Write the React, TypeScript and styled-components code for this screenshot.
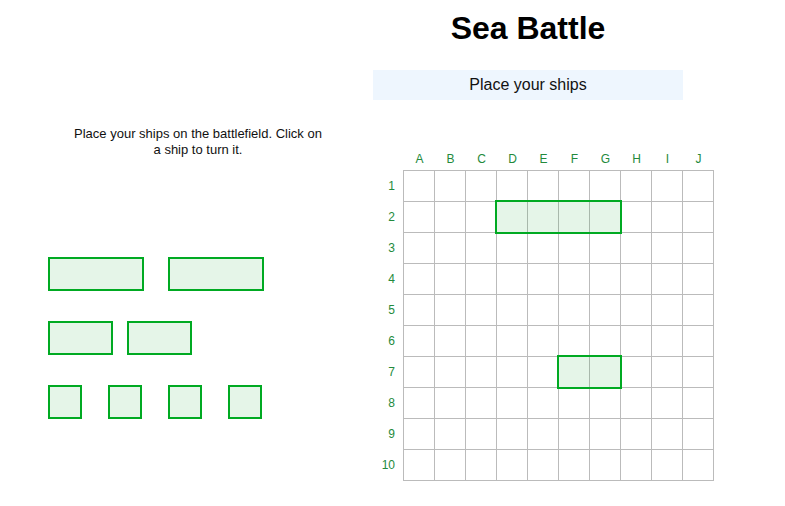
import React from 'react';
import styled, { createGlobalStyle } from 'styled-components';

const GlobalStyle = createGlobalStyle`
  body {
    margin: 0;
    background: #ffffff;
    font-family: Arial, "Liberation Sans", sans-serif;
    color: #000;
  }
`;

const CELL = 31;
const COLS = ['A', 'B', 'C', 'D', 'E', 'F', 'G', 'H', 'I', 'J'];
const ROWS = Array.from({ length: 10 }, (_, i) => i + 1);

type Placed = { col: number; row: number; size: number };

// ships already on the field
const placed: Placed[] = [
  { col: 3, row: 1, size: 4 },
  { col: 5, row: 6, size: 2 },
];

// ships still waiting in the dock, per row with its spacing
const dock = [
  { gap: 24, sizes: [3, 3] },
  { gap: 14, sizes: [2, 2] },
  { gap: 26, sizes: [1, 1, 1, 1] },
];

const Page = styled.div`
  display: flex;
  gap: 25px;
  padding-left: 48px;
  width: 785px;
  height: 506px;
  box-sizing: border-box;
`;

const LeftColumn = styled.div`
  display: flex;
  flex-direction: column;
  width: 300px;
  padding-top: 126px;
`;

const Hint = styled.p`
  margin: 0 auto;
  width: 254px;
  font-size: 13px;
  line-height: 16px;
  text-align: center;
  color: #111;
`;

const Dock = styled.div`
  display: flex;
  flex-direction: column;
  gap: 30px;
  margin-top: 99px;
`;

const DockRow = styled.div<{ $gap: number }>`
  display: flex;
  gap: ${(p) => p.$gap}px;
`;

const Ship = styled.div<{ $size: number }>`
  box-sizing: border-box;
  width: ${(p) => p.$size * CELL + 3}px;
  height: ${CELL + 3}px;
  border: 2px solid #00aa22;
  background: rgba(0, 160, 30, 0.1);
  cursor: pointer;
`;

const FieldShip = styled(Ship)`
  position: absolute;
`;

const RightColumn = styled.div`
  display: flex;
  flex-direction: column;
  padding-top: 10px;
`;

const Title = styled.h1`
  margin: 0;
  width: 310px;
  font-size: 32px;
  line-height: 37px;
  font-weight: bold;
  text-align: center;
`;

const Status = styled.div`
  margin-top: 23px;
  width: 310px;
  height: 30px;
  background: #eef6fe;
  font-size: 16px;
  line-height: 30px;
  text-align: center;
  color: #111;
`;

const Field = styled.div`
  display: grid;
  grid-template-columns: 30px auto;
  grid-template-rows: 22px auto;
  align-items: start;
  margin-top: 48px;
`;

const Label = styled.span`
  font-size: 12px;
  color: #238a3c;
`;

const ColHeader = styled.div`
  grid-column: 2;
  display: flex;
  padding-left: 1px;
`;

const ColLabel = styled(Label)`
  width: ${CELL}px;
  line-height: 22px;
  text-align: center;
`;

const RowHeader = styled.div`
  display: flex;
  flex-direction: column;
  padding-top: 1px;
`;

const RowLabel = styled(Label)`
  height: ${CELL}px;
  line-height: ${CELL}px;
  padding-right: 8px;
  text-align: right;
`;

const Board = styled.div`
  position: relative;
  display: grid;
  grid-template-columns: repeat(10, ${CELL}px);
  grid-auto-rows: ${CELL}px;
  border-left: 1px solid #bbbbbb;
  border-top: 1px solid #bbbbbb;
  width: max-content;
`;

const Cell = styled.div`
  border-right: 1px solid #bbbbbb;
  border-bottom: 1px solid #bbbbbb;
`;

export default function App() {
  return (
    <>
      <GlobalStyle />
      <Page>
        <LeftColumn>
          <Hint>Place your ships on the battlefield. Click on a ship to turn it.</Hint>
          <Dock>
            {dock.map((row, r) => (
              <DockRow key={r} $gap={row.gap}>
                {row.sizes.map((size, i) => (
                  <Ship key={i} $size={size} />
                ))}
              </DockRow>
            ))}
          </Dock>
        </LeftColumn>
        <RightColumn>
          <Title>Sea Battle</Title>
          <Status>Place your ships</Status>
          <Field>
            <ColHeader>
              {COLS.map((c) => (
                <ColLabel key={c}>{c}</ColLabel>
              ))}
            </ColHeader>
            <RowHeader>
              {ROWS.map((r) => (
                <RowLabel key={r}>{r}</RowLabel>
              ))}
            </RowHeader>
            <Board>
              {ROWS.flatMap((r) => COLS.map((c) => <Cell key={c + r} />))}
              {placed.map((s, i) => (
                <FieldShip
                  key={i}
                  $size={s.size}
                  style={{ left: s.col * CELL - 2, top: s.row * CELL - 2 }}
                />
              ))}
            </Board>
          </Field>
        </RightColumn>
      </Page>
    </>
  );
}
